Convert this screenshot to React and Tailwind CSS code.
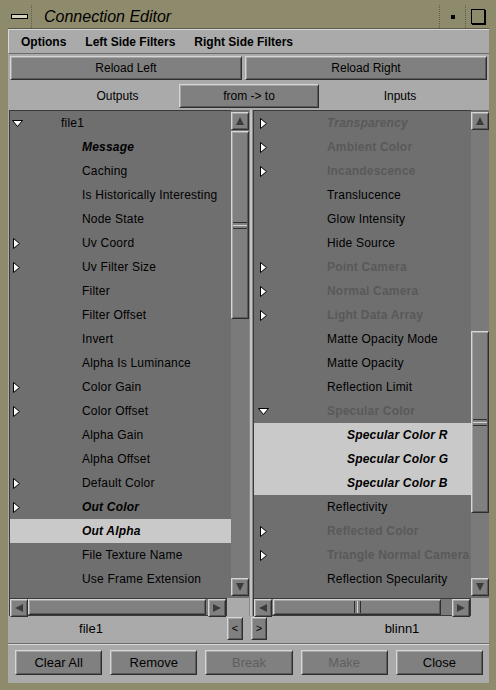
import React from "react";

const leftRows = [
  { label: "file1", level: 0, tri: "down" },
  { label: "Message", level: 1, style: "bi" },
  { label: "Caching", level: 1 },
  { label: "Is Historically Interesting", level: 1 },
  { label: "Node State", level: 1 },
  { label: "Uv Coord", level: 1, tri: "right" },
  { label: "Uv Filter Size", level: 1, tri: "right" },
  { label: "Filter", level: 1 },
  { label: "Filter Offset", level: 1 },
  { label: "Invert", level: 1 },
  { label: "Alpha Is Luminance", level: 1 },
  { label: "Color Gain", level: 1, tri: "right" },
  { label: "Color Offset", level: 1, tri: "right" },
  { label: "Alpha Gain", level: 1 },
  { label: "Alpha Offset", level: 1 },
  { label: "Default Color", level: 1, tri: "right" },
  { label: "Out Color", level: 1, tri: "right", style: "bi" },
  { label: "Out Alpha", level: 1, style: "bi", sel: true },
  { label: "File Texture Name", level: 1 },
  { label: "Use Frame Extension", level: 1 },
];

const rightRows = [
  { label: "Transparency", level: 1, tri: "right", style: "gi" },
  { label: "Ambient Color", level: 1, tri: "right", style: "g" },
  { label: "Incandescence", level: 1, tri: "right", style: "g" },
  { label: "Translucence", level: 1 },
  { label: "Glow Intensity", level: 1 },
  { label: "Hide Source", level: 1 },
  { label: "Point Camera", level: 1, tri: "right", style: "g" },
  { label: "Normal Camera", level: 1, tri: "right", style: "g" },
  { label: "Light Data Array", level: 1, tri: "right", style: "g" },
  { label: "Matte Opacity Mode", level: 1 },
  { label: "Matte Opacity", level: 1 },
  { label: "Reflection Limit", level: 1 },
  { label: "Specular Color", level: 1, tri: "down", style: "g" },
  { label: "Specular Color R", level: 2, style: "bi", sel: true },
  { label: "Specular Color G", level: 2, style: "bi", sel: true },
  { label: "Specular Color B", level: 2, style: "bi", sel: true },
  { label: "Reflectivity", level: 1 },
  { label: "Reflected Color", level: 1, tri: "right", style: "g" },
  { label: "Triangle Normal Camera", level: 1, tri: "right", style: "g" },
  { label: "Reflection Specularity", level: 1 },
];

const raised =
  "border border-t-[#d6d6d6] border-l-[#d6d6d6] border-b-[#2e2e2e] border-r-[#2e2e2e] shadow-[inset_1px_1px_0_#a4a4a4,inset_-1px_-1px_0_#5a5a5a]";

function Tri({ dir }) {
  if (dir === "down") {
    return (
      <svg width="11" height="7" viewBox="0 0 11 7">
        <polygon points="0.5,0.5 10.5,0.5 5.5,6.5" fill="#fff" stroke="#000" />
      </svg>
    );
  }
  return (
    <svg width="7" height="11" viewBox="0 0 7 11">
      <polygon points="0.5,0.5 6.5,5.5 0.5,10.5" fill="#fff" stroke="#000" />
    </svg>
  );
}

function Row({ row, base, side }) {
  const textCls =
    row.style === "bi"
      ? "font-bold italic text-black"
      : row.style === "g"
      ? "font-bold text-[#595959]"
      : row.style === "gi"
      ? "font-bold italic text-[#595959]"
      : "text-black";
  const indent = base + (row.level === 0 ? 0 : row.level === 1 ? 21 : 41);
  let triPos = "left-[3px]";
  if (side === "left" && row.tri === "down") triPos = "left-[2px]";
  if (side === "right") triPos = row.tri === "down" ? "left-[4px]" : "left-[6px]";
  return (
    <div className={`relative h-[24px] flex items-center whitespace-nowrap ${row.sel ? "bg-[#c9c9c9]" : ""}`}>
      {row.tri && (
        <div className={`absolute top-0 h-[24px] flex items-center ${triPos}`}>
          <Tri dir={row.tri} />
        </div>
      )}
      <span className={`tracking-[0.2px] ${textCls}`} style={{ paddingLeft: indent }}>
        {row.label}
      </span>
    </div>
  );
}

function ArrowBox({ dir }) {
  const pts = {
    up: "6,2 10,10 2,10",
    down: "2,2 10,2 6,10",
    left: "2,6 10,2 10,10",
    right: "2,2 10,6 2,10",
  }[dir];
  return (
    <div className={`w-[18px] h-[18px] shrink-0 bg-[#808080] flex items-center justify-center ${raised}`}>
      <svg width="12" height="12" viewBox="0 0 12 12">
        <polygon points={pts} fill="#3c3c3c" />
      </svg>
    </div>
  );
}

function VScroll({ top, size }) {
  return (
    <div className="w-[18px] h-full flex flex-col bg-[#7a7a7a]">
      <ArrowBox dir="up" />
      <div className="flex-1 flex flex-col">
        <div style={{ height: top }} />
        <div className={`bg-[#808080] flex flex-col items-stretch justify-center gap-[2px] px-[1px] ${raised}`} style={{ height: size }}>
          <div className="h-[1px] bg-[#2e2e2e]" />
          <div className="h-[1px] bg-[#d6d6d6]" />
          <div className="h-[1px] bg-[#2e2e2e]" />
        </div>
      </div>
      <ArrowBox dir="down" />
    </div>
  );
}

function HScroll({ left, size, grip }) {
  return (
    <div className="h-[18px] flex bg-[#7a7a7a] border border-[#3a3a3a]">
      <ArrowBox dir="left" />
      <div className="flex-1 flex">
        <div style={{ width: left }} />
        <div className={`bg-[#808080] flex items-stretch justify-center gap-[2px] py-[1px] ${raised}`} style={{ width: size }}>
          {grip && (
            <>
              <div className="w-[1px] bg-[#2e2e2e]" />
              <div className="w-[1px] bg-[#d6d6d6]" />
              <div className="w-[1px] bg-[#2e2e2e]" />
            </>
          )}
        </div>
      </div>
      <ArrowBox dir="right" />
    </div>
  );
}

function Btn({ children, disabled, className = "" }) {
  return (
    <div className={`bg-[#808080] flex items-center justify-center ${raised} ${disabled ? "text-[#5f5f5f]" : "text-black"} ${className}`}>
      {children}
    </div>
  );
}

function ListPanel({ rows, base, side, vTop, vSize, hLeft, hSize, grip }) {
  return (
    <div className="flex flex-col h-full">
      <div className="flex flex-1 min-h-0">
        <div className="flex-1 bg-[#6f6f6f] border-t border-l border-[#3a3a3a] overflow-hidden">
          {rows.map((r) => (
            <Row key={r.label} row={r} base={base} side={side} />
          ))}
        </div>
        <div className="pt-[2px] pb-[2px] bg-[#6f6f6f]">
          <VScroll top={vTop} size={vSize} />
        </div>
      </div>
      <div className="flex">
        <div className="w-[218px]">
          <HScroll left={hLeft} size={hSize} grip={grip} />
        </div>
      </div>
    </div>
  );
}

export default function App() {
  return (
    <div
      className="w-[496px] h-[690px] bg-[#8e8b6c] pt-[5px] pl-[8px] pr-[7px] flex flex-col text-[12px] leading-none"
      style={{ fontFamily: '"Liberation Sans", Arial, sans-serif' }}
    >
      {/* title bar */}
      <div className="h-[24px] flex items-stretch bg-[#8e8b6c] border-b border-[#5e5c48]">
        <div className="w-[24px] flex items-center justify-center border-r border-dotted border-[#5e5c48]">
          <div className="w-[17px] h-[5px] bg-[#d4d2bc] border border-black" />
        </div>
        <div className="flex-1 flex items-center pl-[12px] italic text-[16px] text-black">Connection Editor</div>
        <div className="w-[26px] flex items-center justify-center border-l border-dotted border-[#5e5c48]">
          <div className="w-[4px] h-[4px] bg-black" />
        </div>
        <div className="w-[24px] flex items-center justify-center border-l border-dotted border-[#5e5c48]">
          <div className="w-[14px] h-[15px] border border-black shadow-[1px_1px_0_#000]" />
        </div>
      </div>

      {/* client */}
      <div className="w-[481px] h-[654px] bg-[#aaaaaa] flex flex-col">
        <div className="h-[25px] flex items-center gap-[19px] pl-[12px] font-bold text-[12px] border-t border-l border-t-[#d8d8d8] border-l-[#d8d8d8] border-b border-b-[#6a6a6a]">
          <span>Options</span>
          <span>Left Side Filters</span>
          <span>Right Side Filters</span>
        </div>

        <div className="mt-[2px] h-[24px] flex gap-[3px] px-[2px]">
          <Btn className="w-[232px]">Reload Left</Btn>
          <Btn className="flex-1">Reload Right</Btn>
        </div>

        <div className="mt-[3px] h-[25px] flex items-center">
          <div className="w-[171px] pl-[48px] text-center">Outputs</div>
          <Btn className="w-[140px] h-[24px]">from -&gt; to</Btn>
          <div className="flex-1 pr-[8px] text-center">Inputs</div>
        </div>

        <div className="mt-[2px] h-[506px] flex">
          <div className="ml-[1px] w-[240px]">
            <ListPanel rows={leftRows} base={51} side="left" vTop={1} vSize={188} hLeft={0} hSize={178} grip={false} />
          </div>
          <div className="w-[4px] bg-[#c4c4c4] border-x border-[#8a8a8a]" />
          <div className="w-[236px]">
            <ListPanel rows={rightRows} base={52} side="right" vTop={201} vSize={182} hLeft={1} hSize={168} grip />
          </div>
        </div>

        <div className="h-[25px] flex items-center">
          <div className="w-[218px] text-center pr-[52px] text-[13px]">file1</div>
          <Btn className="w-[16px] h-[23px] ml-[1px] text-[11px]">&lt;</Btn>
          <div className="w-[8px]" />
          <Btn className="w-[16px] h-[23px] text-[11px]">&gt;</Btn>
          <div className="flex-1 text-center pl-[48px] text-[13px]">blinn1</div>
        </div>

        <div className="mt-[2px] h-[2px] border-t border-[#6a6a6a] border-b border-b-[#d8d8d8]" />

        <div className="mt-[5px] h-[25px] flex gap-[8px] pl-[7px] pr-[6px] text-[13px]">
          <Btn className="flex-1">Clear All</Btn>
          <Btn className="flex-1">Remove</Btn>
          <Btn className="flex-1" disabled>Break</Btn>
          <Btn className="flex-1" disabled>Make</Btn>
          <Btn className="flex-1">Close</Btn>
        </div>
      </div>
    </div>
  );
}
